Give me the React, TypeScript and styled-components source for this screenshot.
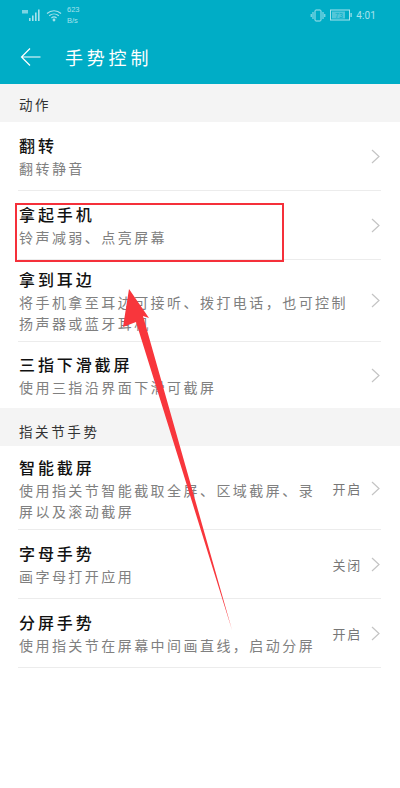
import React from "react";
import styled, { createGlobalStyle } from "styled-components";

const Global = createGlobalStyle`
  html, body { margin: 0; padding: 0; background: #fff; }
  body { font-family: "Noto Sans CJK SC", "Noto Sans", sans-serif; }
`;
const Page = styled.div`
  position: relative; width: 400px; height: 788px; overflow: hidden; background: #fff;
`;
const Header = styled.header`
  height: 84px; background: #00adc6; display: flex; flex-direction: column; color: #fff;
`;
const StatusBar = styled.div`
  height: 30px; display: flex; align-items: center; justify-content: space-between; padding: 0 24px 0 21px; color: #a5e2ec;
`;
const StatusGroup = styled.div`
  display: flex; align-items: center; gap: 4px;
`;
const Speed = styled.div`
  font: 7.5px/11px "Liberation Sans", sans-serif; margin-left: 1px; margin-top: 0;
`;
const Clock = styled.span`
  font: 10px "Roboto", sans-serif; letter-spacing: 0.1px;
`;
const NavBar = styled.div`
  flex: 1; display: flex; align-items: center; padding: 0 0 0 20px; gap: 24px;
`;
const NavTitle = styled.h1`
  margin: 0; font-size: 18px; font-weight: 400; letter-spacing: 3.8px; line-height: 24px;
`;
const SectionHead = styled.div<{ $pad: number }>`
  height: 38px; box-sizing: border-box; background: #f4f4f4; display: flex; align-items: center;
  padding: ${p => p.$pad}px 19px 0;
  font-size: 13.5px; letter-spacing: 2.6px; color: #333;
`;
const Row = styled.div<{ $h: number; $last?: boolean; $pad?: number }>`
  height: ${p => p.$h}px; margin: 0 19px 0 18px; box-sizing: border-box;
  padding-top: ${p => p.$pad ?? 0}px;
  display: flex; align-items: center;
  border-bottom: 1px solid ${p => (p.$last ? "transparent" : "#ececec")};
`;
const RowBody = styled.div`
  flex: 1; min-width: 0; padding-left: 1px;
`;
const RowTitle = styled.div`
  font-size: 16px; line-height: 22px; font-weight: 500; color: #111; letter-spacing: 2.9px;
`;
const RowDesc = styled.div`
  font-size: 14px; line-height: 21px; color: #808080; letter-spacing: 2.45px; margin-top: 2px;
`;
const RowValue = styled.span`
  font-size: 13px; color: #777; letter-spacing: 1.7px; white-space: nowrap;
`;
const Chevron = styled.svg`
  width: 9px; height: 15px; margin-left: 9px; margin-right: 1px; flex: none;
  fill: none; stroke: #c4c4c4; stroke-width: 1.2;
`;
const Highlight = styled.div`
  position: absolute; left: 15px; top: 203px; width: 269px; height: 59px; box-sizing: border-box;
  border: 2px solid #f5303a;
`;
const Annotation = styled.svg`
  position: absolute; left: 0; top: 0; width: 400px; height: 788px; pointer-events: none;
`;

type Item = { t: string; d: React.ReactNode; h: number; v?: string; last?: boolean; pad?: number };

const first: Item[] = [
  { t: "翻转", d: "翻转静音", h: 69 },
  { t: "拿起手机", d: "铃声减弱、点亮屏幕", h: 69 },
  { t: "拿到耳边", d: <>将手机拿至耳边可接听、拨打电话，也可控制<br />扬声器或蓝牙耳机</>, h: 82 },
  { t: "三指下滑截屏", d: "使用三指沿界面下滑可截屏", h: 66, last: true, pad: 2 },
];
const second: Item[] = [
  { t: "智能截屏", d: <>使用指关节智能截取全屏、区域截屏、录<br />屏以及滚动截屏</>, h: 84, v: "开启", pad: 2 },
  { t: "字母手势", d: "画字母打开应用", h: 69, v: "关闭" },
  { t: "分屏手势", d: "使用指关节在屏幕中间画直线，启动分屏", h: 69, v: "开启" },
];

const renderRow = (i: Item) => (
  <Row key={i.t} $h={i.h} $last={i.last} $pad={i.pad}>
    <RowBody>
      <RowTitle>{i.t}</RowTitle>
      <RowDesc>{i.d}</RowDesc>
    </RowBody>
    {i.v && <RowValue>{i.v}</RowValue>}
    <Chevron viewBox="0 0 9 15"><path d="M1 1 8 7.5 1 14" /></Chevron>
  </Row>
);

export default function App() {
  return (
    <Page>
      <Global />
      <Header>
        <StatusBar>
          <StatusGroup>
            <svg width="21" height="14" viewBox="0 0 21 14" fill="currentColor">
              <rect x="8" y="10" width="1.6" height="3" /><rect x="11" y="7.5" width="1.6" height="5.5" />
              <rect x="14" y="4.5" width="1.6" height="8.5" /><rect x="17" y="1.5" width="1.6" height="11.5" />
              <rect x="1" y="2" width="6" height="3.5" opacity=".75" />
            </svg>
            <svg width="16" height="13" viewBox="0 0 16 13" fill="none" stroke="currentColor" strokeWidth="1.2">
              <path d="M1 4.5C5 .8 11 .8 15 4.5M3.2 6.8c2.8-2.4 6.8-2.4 9.6 0M5.4 9c1.5-1.2 3.7-1.2 5.2 0" />
              <circle cx="8" cy="11" r=".8" fill="currentColor" />
            </svg>
            <Speed>623<br />B/s</Speed>
          </StatusGroup>
          <StatusGroup>
            <svg width="16" height="13" viewBox="0 0 16 13" fill="none" stroke="currentColor" strokeWidth="1">
              <rect x="5" y="1" width="6" height="11" rx="1" />
              <path d="M3 3v7M1.2 5v3M13 3v7M14.8 5v3" />
            </svg>
            <svg width="22" height="12" viewBox="0 0 22 12">
              <rect x=".5" y="1" width="19" height="10" fill="none" stroke="currentColor" />
              <rect x="2" y="2.5" width="13" height="7" fill="currentColor" opacity=".5" />
              <rect x="20.5" y="4" width="1.2" height="4" fill="currentColor" />
              <text x="9" y="9" fontSize="7" textAnchor="middle" fill="#00adc6" fontFamily="Liberation Sans">73</text>
            </svg>
            <Clock>4:01</Clock>
          </StatusGroup>
        </StatusBar>
        <NavBar>
          <svg width="21" height="20" viewBox="0 0 21 20" fill="none" stroke="#fff" strokeWidth="1.2">
            <path d="M20.5 10H1.5M10 1.5 1.5 10 10 18.5" />
          </svg>
          <NavTitle>手势控制</NavTitle>
        </NavBar>
      </Header>
      <SectionHead $pad={2}>动作</SectionHead>
      {first.map(renderRow)}
      <SectionHead $pad={8}>指关节手势</SectionHead>
      {second.map(renderRow)}
      <Highlight />
      <Annotation viewBox="0 0 400 788">
        <polygon points="129,289 149,318 143,316 232,630 136,322 123,327" fill="#f8363c" />
      </Annotation>
    </Page>
  );
}
